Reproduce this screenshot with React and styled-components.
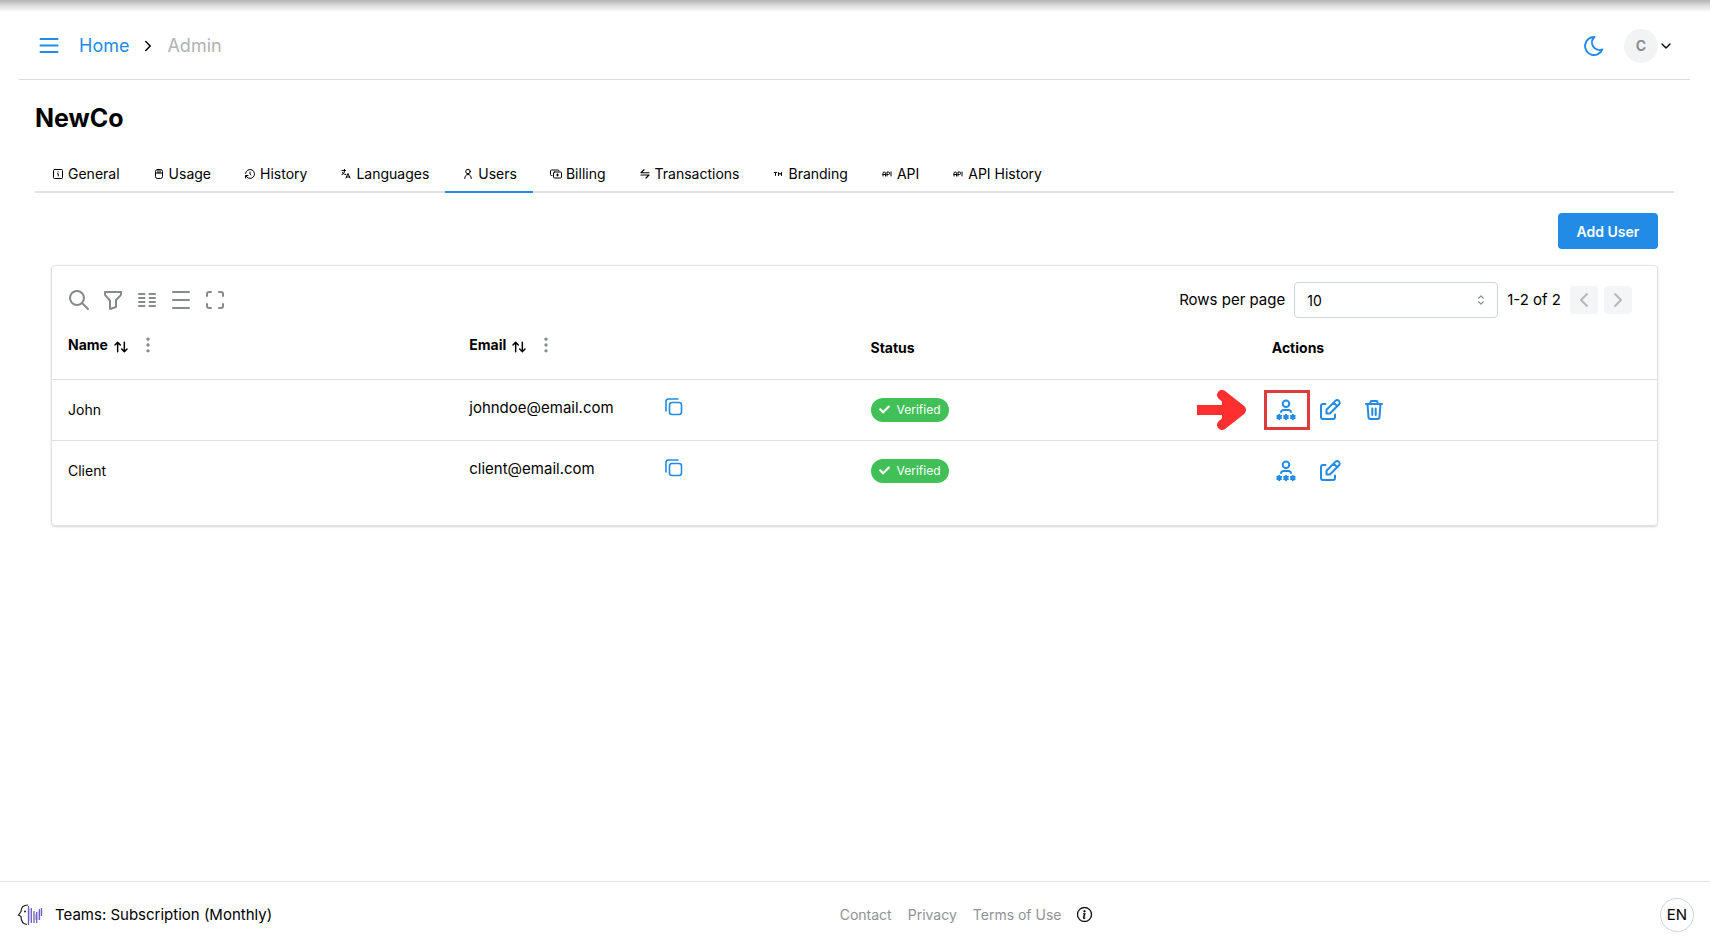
import React from 'react';
import styled, { createGlobalStyle, css } from 'styled-components';
import {
  TbApi,
  TbBaselineDensityMedium,
  TbChevronDown,
  TbChevronLeft,
  TbChevronRight,
  TbColumns,
  TbDotsVertical,
  TbFilter,
  TbHistory,
  TbLanguage,
  TbMaximize,
  TbMoon,
  TbSearch,
  TbSelector,
  TbTrademark,
} from 'react-icons/tb';
import { BsInfoCircle } from 'react-icons/bs';
import { FaCheck } from 'react-icons/fa';

const GlobalStyle = createGlobalStyle`
  * {
    box-sizing: border-box;
  }

  body {
    margin: 0;
    background: #fff;
    color: #000;
    font-family: Inter, 'Liberation Sans', sans-serif;
    font-size: 15px;
    line-height: 24px;
  }

  button, select {
    font-family: inherit;
    color: inherit;
  }
`;

const Page = styled.div`
  min-height: 100vh;
  display: flex;
  flex-direction: column;
`;

const TopShade = styled.div`
  height: 12px;
  background: linear-gradient(#b4b4b4, #dedede 50%, #fff);
`;

const Header = styled.header`
  height: 68px;
  margin: 0 20px 0 19px;
  padding: 0 16px;
  display: flex;
  align-items: center;
  justify-content: space-between;
  border-bottom: 1px solid #dcdcdc;
`;

const HeaderGroup = styled.div`
  display: flex;
  align-items: center;
`;

const IconButton = styled.button`
  width: 28px;
  height: 28px;
  padding: 0;
  display: inline-flex;
  align-items: center;
  justify-content: center;
  flex-shrink: 0;
  border: none;
  border-radius: 4px;
  background: transparent;
  color: ${(props) => props.$color || '#228be6'};
  cursor: pointer;

  &:disabled {
    background: #f4f5f6;
    color: #b4b8bc;
    cursor: default;
  }
`;

const Breadcrumbs = styled.nav`
  margin-left: 16px;
  display: flex;
  align-items: center;
  gap: 10px;
  font-size: 18px;

  a {
    color: #228be6;
    text-decoration: none;
  }

  span {
    color: #b0b2b4;
  }
`;

const UserMenu = styled.button`
  margin-left: 16px;
  padding: 0;
  display: flex;
  align-items: center;
  border: none;
  background: transparent;
  cursor: pointer;
`;

const Avatar = styled.span`
  width: 34px;
  height: 34px;
  display: flex;
  align-items: center;
  justify-content: center;
  border-radius: 50%;
  background: #f2f3f4;
  color: #868e96;
  font-size: 14px;
  font-weight: 700;
`;

const Main = styled.main`
  flex: 1;
  padding: 20px 36px 20px 35px;
`;

const Title = styled.h1`
  margin: 0 0 20px;
  font-size: 25px;
  line-height: 36px;
  font-weight: 700;
`;

const Tabs = styled.div`
  display: flex;
  border-bottom: 2px solid #dee2e6;
`;

const Tab = styled.button`
  height: 37px;
  margin-bottom: -2px;
  padding: 0 16px;
  display: flex;
  align-items: center;
  gap: 3px;
  border: none;
  border-bottom: 2px solid transparent;
  background: transparent;
  font-size: 14px;
  white-space: nowrap;
  cursor: pointer;

  svg {
    width: 14px;
    padding: 1px;
  }

  ${(props) =>
    props.$active &&
    css`
      border-bottom-color: #228be6;
    `}
`;

const Panel = styled.section`
  padding: 20px 16px 0;
`;

const PanelActions = styled.div`
  display: flex;
  justify-content: flex-end;
  margin-bottom: 16px;
`;

const AddButton = styled.button`
  width: 100px;
  height: 36px;
  padding: 0;
  border: none;
  border-radius: 4px;
  background: #228be6;
  color: #fff;
  font-size: 14px;
  font-weight: 600;
  cursor: pointer;
`;

const Card = styled.div`
  padding-bottom: 24px;
  border: 1px solid #dee2e6;
  border-radius: 4px;
  box-shadow: 0 1px 2px rgba(0, 0, 0, 0.16);
`;

const Toolbar = styled.div`
  padding: 16px 25px 0 13px;
  display: flex;
  align-items: center;
  justify-content: space-between;
`;

const Tools = styled.div`
  display: flex;
  gap: 6px;
`;

const Pagination = styled.div`
  display: flex;
  align-items: center;
  gap: 9px;
`;

const PageButtons = styled.div`
  display: flex;
  gap: 6px;
`;

const SelectBox = styled.span`
  position: relative;
  display: block;
  width: 204px;

  svg {
    position: absolute;
    top: 11px;
    right: 10px;
    color: #868e96;
    pointer-events: none;
  }
`;

const Select = styled.select`
  width: 100%;
  height: 36px;
  padding: 0 12px;
  appearance: none;
  border: 1px solid #ced4da;
  border-radius: 4px;
  background: #fff;
  font-size: 14px;
`;

const Table = styled.table`
  width: 100%;
  table-layout: fixed;
  border-collapse: collapse;
  font-size: 14px;

  th {
    height: 61px;
    padding: 0 16px;
    text-align: left;
    font-weight: 700;
  }

  td {
    height: 61px;
    padding: 0 16px;
    border-top: 1px solid #dee2e6;
  }
`;

const HeadCell = styled.div`
  display: flex;
  align-items: center;
  gap: 5px;
  padding-bottom: ${(props) => (props.$sortable ? '6px' : '0')};
`;

const EmailCell = styled.div`
  display: grid;
  grid-template-columns: 1fr 1fr;
  align-items: center;
  gap: 12px;
  padding-bottom: 4px;
  font-size: 15px;
`;

const Badge = styled.span`
  width: 78px;
  height: 24px;
  padding: 0 8px;
  display: flex;
  align-items: center;
  justify-content: space-between;
  border-radius: 12px;
  background: #40c057;
  color: #fff;
  font-size: 12px;
`;

const RowActions = styled.div`
  display: flex;
  align-items: center;
  gap: 16px;
`;

const Highlighted = styled.span`
  position: relative;
  display: flex;
`;

const HighlightBox = styled.span`
  position: absolute;
  top: -6px;
  left: -8px;
  width: 46px;
  height: 40px;
  border: 3px solid #dc3c3e;
  pointer-events: none;
`;

const HighlightArrow = styled.svg`
  position: absolute;
  top: -7px;
  right: 53px;
  pointer-events: none;
`;

const Footer = styled.footer`
  height: 64px;
  padding: 2px 16px 0 17px;
  display: flex;
  align-items: center;
  justify-content: space-between;
  border-top: 1px solid #e4e4e4;
`;

const Plan = styled.div`
  display: flex;
  align-items: center;
  gap: 12px;
`;

const FooterLinks = styled.nav`
  display: flex;
  align-items: center;
  gap: 16px;
  font-size: 14px;

  a {
    color: #909296;
    text-decoration: none;
  }
`;

const LanguageButton = styled.button`
  width: 34px;
  height: 34px;
  padding: 0;
  border: 1px solid #ced4da;
  border-radius: 50%;
  background: #fff;
  font-size: 15px;
  cursor: pointer;
`;

const Icon = ({ size = 24, stroke = 2, children }) => (
  <svg
    width={size}
    height={size}
    viewBox='0 0 24 24'
    fill='none'
    stroke='currentColor'
    strokeWidth={stroke}
    strokeLinecap='round'
    strokeLinejoin='round'
    aria-hidden='true'
  >
    {children}
  </svg>
);

const MenuIcon = () => (
  <Icon>
    <path d='M3.500 5h17M3.500 11.500h17M3.500 18h17' />
  </Icon>
);

const SortIcon = () => (
  <Icon size={16} stroke={2.2}>
    <path d='M7 22V8M3 12l4-4 4 4M17 8v14M13 18l4 4 4-4' />
  </Icon>
);

const InfoSquareIcon = () => (
  <Icon size={14}>
    <rect x='3' y='3' width='18' height='18' rx='2' />
    <path d='M12 7.500v.5M11 11.500h1.500V16' />
  </Icon>
);

const UsageIcon = () => (
  <Icon size={14}>
    <rect x='5' y='3' width='14' height='18' rx='4' />
    <path d='M5 10h14M10 3v7M14 3v7' />
  </Icon>
);

const UserIcon = () => (
  <Icon size={14}>
    <circle cx='12' cy='7' r='4.500' />
    <path d='M5.500 21c0-5 3-8 6.500-8s6.500 3 6.500 8' />
  </Icon>
);

const BillingIcon = () => (
  <Icon size={14}>
    <path d='M4 15H3a2 2 0 0 1-2-2V6a2 2 0 0 1 2-2h13a2 2 0 0 1 2 2' />
    <rect x='7' y='8' width='16' height='12' rx='2' />
    <path d='M15 12v4M13 14h4' />
  </Icon>
);

const TransferIcon = () => (
  <Icon size={14} stroke={2.4}>
    <path d='M20 9.500H4l6-6M4 14h16l-6 6' />
  </Icon>
);

const CopyIcon = () => (
  <Icon stroke={1.6}>
    <rect x='7.500' y='6.500' width='12' height='12' rx='2.500' />
    <path d='M4 15V5.500A2.500 2.500 0 0 1 6.500 3H16' />
  </Icon>
);

const UserPasswordIcon = () => (
  <Icon>
    <circle cx='12' cy='5.700' r='3.300' />
    <path d='M7 14c.3-1.200 1.200-2 2.500-2h5c1.300 0 2.200.8 2.500 2' />
    <path d='M5.200 16.800v4.400M3.300 17.900l3.800 2.200M7.100 17.900l-3.800 2.200M12 16.800v4.400M10.100 17.900l3.800 2.200M13.900 17.900l-3.800 2.200M18.800 16.800v4.400M16.900 17.900l3.800 2.200M20.700 17.900l-3.800 2.200' />
  </Icon>
);

const EditIcon = () => (
  <Icon>
    <path d='M7.500 6H5a2 2 0 0 0-2 2v11a2 2 0 0 0 2 2h10a2 2 0 0 0 2-2v-2.500' />
    <path d='M8.500 15.500v-3.800l8.800-8.800a2.300 2.300 0 0 1 3.600 3.600l-9 9H8.500zM16 5l3 3' />
  </Icon>
);

const TrashIcon = () => (
  <Icon>
    <path d='M4 6h16M8.500 6V4a1 1 0 0 1 1-1h5a1 1 0 0 1 1 1v2M5.500 6l1 13a2 2 0 0 0 2 2h7a2 2 0 0 0 2-2l1-13M10.300 10.500v6.500M13.700 10.500v6.500' />
  </Icon>
);

const Logo = () => (
  <svg width='26' height='24' viewBox='0 0 26 24' fill='none' aria-hidden='true'>
    <path
      d='M11 2C6 2 4 5 4 8.500L1.500 12 4 13.500C4 18 6 21 10 21.500'
      stroke='#222'
      strokeWidth='1.200'
    />
    <circle cx='8' cy='8.500' r='1' fill='#222' />
    <path
      d='M11.500 3v19M14.300 5v15M17 8v12M19.700 9v11M22.500 6v11M24.500 5v8'
      stroke='#6a5fc0'
      strokeWidth='1.300'
    />
    <path d='M12.900 6v12M18.400 11v6M21.100 8v9' stroke='#a79fe0' strokeWidth='.8' />
  </svg>
);

const tabs = [
  { label: 'General', icon: <InfoSquareIcon /> },
  { label: 'Usage', icon: <UsageIcon /> },
  { label: 'History', icon: <TbHistory size={14} /> },
  { label: 'Languages', icon: <TbLanguage size={14} /> },
  { label: 'Users', icon: <UserIcon /> },
  { label: 'Billing', icon: <BillingIcon /> },
  { label: 'Transactions', icon: <TransferIcon /> },
  { label: 'Branding', icon: <TbTrademark size={14} /> },
  { label: 'API', icon: <TbApi size={14} /> },
  { label: 'API History', icon: <TbApi size={14} /> },
];

const users = [
  { name: 'John', email: 'johndoe@email.com', removable: true, highlighted: true },
  { name: 'Client', email: 'client@email.com', removable: false, highlighted: false },
];

const SortableHead = ({ label }) => (
  <HeadCell $sortable>
    {label}
    <SortIcon />
    <IconButton $color='#868a8e' aria-label={`${label} column actions`}>
      <TbDotsVertical size={20} />
    </IconButton>
  </HeadCell>
);

const UserRow = ({ user }) => (
  <tr>
    <td>{user.name}</td>
    <td>
      <EmailCell>
        <span>{user.email}</span>
        <IconButton aria-label='Copy email'>
          <CopyIcon />
        </IconButton>
      </EmailCell>
    </td>
    <td>
      <Badge>
        <FaCheck size={11} />
        Verified
      </Badge>
    </td>
    <td>
      <RowActions>
        <Highlighted>
          <IconButton aria-label='Reset password'>
            <UserPasswordIcon />
          </IconButton>
          {user.highlighted && (
            <>
              <HighlightBox />
              <HighlightArrow width='50' height='42' viewBox='0 0 50 42' aria-hidden='true'>
                <path d='M0 21h40' stroke='#fd2f2f' strokeWidth='10' />
                <path
                  d='M25 6l19 15-19 15'
                  fill='#fd2f2f'
                  stroke='#fd2f2f'
                  strokeWidth='10'
                  strokeLinecap='round'
                  strokeLinejoin='round'
                />
              </HighlightArrow>
            </>
          )}
        </Highlighted>
        <IconButton aria-label='Edit user'>
          <EditIcon />
        </IconButton>
        {user.removable && (
          <IconButton aria-label='Delete user'>
            <TrashIcon />
          </IconButton>
        )}
      </RowActions>
    </td>
  </tr>
);

const App = () => {
  return (
    <Page>
      <GlobalStyle />
      <TopShade />
      <Header>
        <HeaderGroup>
          <IconButton aria-label='Menu'>
            <MenuIcon />
          </IconButton>
          <Breadcrumbs>
            <a href='#home'>Home</a>
            <TbChevronRight size={18} />
            <span>Admin</span>
          </Breadcrumbs>
        </HeaderGroup>
        <HeaderGroup>
          <IconButton aria-label='Dark mode'>
            <TbMoon size={24} />
          </IconButton>
          <UserMenu aria-label='Account'>
            <Avatar>C</Avatar>
            <TbChevronDown size={16} />
          </UserMenu>
        </HeaderGroup>
      </Header>

      <Main>
        <Title>NewCo</Title>
        <Tabs role='tablist'>
          {tabs.map((tab) => (
            <Tab
              key={tab.label}
              role='tab'
              aria-selected={tab.label === 'Users'}
              $active={tab.label === 'Users'}
            >
              {tab.icon}
              {tab.label}
            </Tab>
          ))}
        </Tabs>

        <Panel>
          <PanelActions>
            <AddButton>Add User</AddButton>
          </PanelActions>
          <Card>
            <Toolbar>
              <Tools>
                <IconButton $color='#868a8e' aria-label='Search'>
                  <TbSearch size={24} />
                </IconButton>
                <IconButton $color='#868a8e' aria-label='Filters'>
                  <TbFilter size={24} />
                </IconButton>
                <IconButton $color='#868a8e' aria-label='Columns'>
                  <TbColumns size={24} />
                </IconButton>
                <IconButton $color='#868a8e' aria-label='Density'>
                  <TbBaselineDensityMedium size={24} />
                </IconButton>
                <IconButton $color='#868a8e' aria-label='Full screen'>
                  <TbMaximize size={24} />
                </IconButton>
              </Tools>
              <Pagination>
                <label htmlFor='rows'>Rows per page</label>
                <SelectBox>
                  <Select id='rows' defaultValue='10'>
                    <option>10</option>
                    <option>20</option>
                    <option>50</option>
                  </Select>
                  <TbSelector size={14} />
                </SelectBox>
                <span>1-2 of 2</span>
                <PageButtons>
                  <IconButton disabled aria-label='Previous page'>
                    <TbChevronLeft size={24} />
                  </IconButton>
                  <IconButton disabled aria-label='Next page'>
                    <TbChevronRight size={24} />
                  </IconButton>
                </PageButtons>
              </Pagination>
            </Toolbar>
            <Table>
              <thead>
                <tr>
                  <th>
                    <SortableHead label='Name' />
                  </th>
                  <th>
                    <SortableHead label='Email' />
                  </th>
                  <th>
                    <HeadCell>Status</HeadCell>
                  </th>
                  <th>
                    <HeadCell>Actions</HeadCell>
                  </th>
                </tr>
              </thead>
              <tbody>
                {users.map((user) => (
                  <UserRow key={user.email} user={user} />
                ))}
              </tbody>
            </Table>
          </Card>
        </Panel>
      </Main>

      <Footer>
        <Plan>
          <Logo />
          Teams: Subscription (Monthly)
        </Plan>
        <FooterLinks>
          <a href='#contact'>Contact</a>
          <a href='#privacy'>Privacy</a>
          <a href='#terms'>Terms of Use</a>
          <BsInfoCircle size={15} strokeWidth={0.4} />
        </FooterLinks>
        <LanguageButton>EN</LanguageButton>
      </Footer>
    </Page>
  );
};

export default App;
